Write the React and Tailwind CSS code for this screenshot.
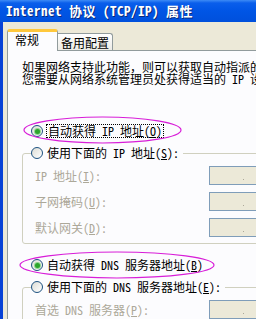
import React from 'react';

const FONT = "font-['Noto_Sans_Mono_CJK_SC','Noto_Sans_CJK_SC',sans-serif]";

const Radio = ({ checked }) => (
  <span className="w-[12px] h-[12px] rounded-full border border-[#1C5180] bg-[linear-gradient(135deg,#DCDCD5,#FFFFFF)] flex items-center justify-center shrink-0">
    {checked && <span className="w-[5px] h-[5px] rounded-full bg-[#2CA52C] shadow-[0_0_0_1px_#8FD68F]" />}
  </span>
);

const IpBox = () => (
  <div className="w-[60px] h-[19px] border border-[#7F9DB9] bg-[#ECE9D8] flex items-end pb-[4px] pl-[33px]">
    <span className="w-[1px] h-[1px] bg-[#ACA899]" />
  </div>
);

const Field = ({ label }) => (
  <div className="flex items-center h-[19px]">
    <span className="w-[174px] text-[#ACA899] leading-[12px] whitespace-nowrap">{label}</span>
    <IpBox />
  </div>
);

const App = () => {
  return (
    <div className={`w-[256px] h-[319px] overflow-hidden relative bg-[#ECE9D8] text-[12px] text-black ${FONT}`}>
      {/* title bar */}
      <div className="h-[22px] bg-[linear-gradient(#3D8BF5_0px,#0A5EEB_3px,#0055E5_50%,#0050DC_100%)] flex items-center pl-[6px] text-white font-bold text-[13px] tracking-[0.5px] whitespace-nowrap [text-shadow:1px_1px_0_#0A2A7A]">
        Internet 协议 (TCP/IP) 属性
      </div>

      <div className="h-[297px] border-l-[3px] border-[#0842D6] pl-[4px] pt-[7px]">
        {/* tabs */}
        <div className="flex items-end h-[21px]">
          <div className="relative z-10 w-[51px] h-[22px] -mb-[1px] bg-[#FCFCFE] border-x border-[#919B9C] rounded-t-[3px] border-t-[3px] border-t-[#FFC83C] pl-[7px] pt-[2px] leading-[12px]">
            常规
          </div>
          <div className="w-[55px] h-[17px] bg-[linear-gradient(#FFFFFF,#ECEBE6)] border-t border-r border-[#919B9C] rounded-tr-[3px] pl-[3px] pt-[3px] leading-[12px] whitespace-nowrap">
            备用配置
          </div>
        </div>

        {/* panel */}
        <div className="w-[270px] h-[280px] bg-[#FCFCFE] border border-[#919B9C] pl-[14px] pt-[10px]">
          <p className="leading-[12px] whitespace-nowrap">
            如果网络支持此功能，则可以获取自动指派的 IP 设置。否则，
            <br />
            您需要从网络系统管理员处获得适当的 IP 设置。
          </p>

          <div className="mt-[38px] h-[16px] flex items-center pl-[9px] gap-[3px]">
            <Radio checked />
            <span className="border border-dotted border-black px-[1px] leading-[12px] whitespace-nowrap">
              自动获得 IP 地址(<u>O</u>)
            </span>
          </div>

          <div className="mt-[14px] h-[91px] border border-[#D0D0BF] rounded-[3px] pl-[12px]">
            <div className="-mt-[9px] -ml-[4px] h-[16px] w-fit flex items-center gap-[4px] bg-[#FCFCFE] pr-[4px] whitespace-nowrap leading-[12px]">
              <Radio />
              <span>使用下面的 IP 地址(<u>S</u>):</span>
            </div>
            <div className="mt-[5px] flex flex-col gap-[7px]">
              <Field label={<>IP 地址(<u>I</u>):</>} />
              <Field label={<>子网掩码(<u>U</u>):</>} />
              <Field label={<>默认网关(<u>D</u>):</>} />
            </div>
          </div>

          <div className="mt-[13px] h-[16px] flex items-center pl-[9px] gap-[4px]">
            <Radio checked />
            <span className="leading-[12px] whitespace-nowrap">
              自动获得 DNS 服务器地址(<u>B</u>)
            </span>
          </div>

          <div className="mt-[14px] h-[91px] border border-[#D0D0BF] rounded-[3px] pl-[12px]">
            <div className="-mt-[9px] -ml-[4px] h-[16px] w-fit flex items-center gap-[4px] bg-[#FCFCFE] pr-[4px] whitespace-nowrap leading-[12px]">
              <Radio />
              <span>使用下面的 DNS 服务器地址(<u>E</u>):</span>
            </div>
            <div className="mt-[5px] flex flex-col gap-[7px]">
              <Field label={<>首选 DNS 服务器(<u>P</u>):</>} />
            </div>
          </div>
        </div>
      </div>

      {/* annotation ellipses */}
      <svg className="absolute left-0 top-0 pointer-events-none" width="256" height="319">
        <ellipse cx="102.5" cy="130" rx="78.5" ry="13" fill="none" stroke="#D81ED8" strokeWidth="1.2" />
        <ellipse cx="117" cy="265" rx="97" ry="13" fill="none" stroke="#D81ED8" strokeWidth="1.2" />
      </svg>
    </div>
  );
};

export default App;
